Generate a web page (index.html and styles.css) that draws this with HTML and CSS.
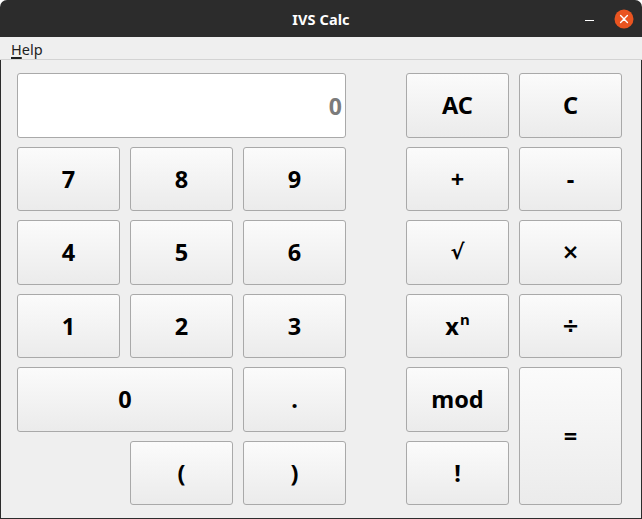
FILE: index.html
```html
<!DOCTYPE html>
<html lang="en">
<head>
<meta charset="utf-8">
<title>IVS Calc</title>
<link rel="stylesheet" href="styles.css">
</head>
<body>
<div class="window">
  <header class="titlebar">
    <span class="title">IVS Calc</span>
    <div class="controls">
      <span class="minimize"></span>
      <span class="close">
        <svg width="20" height="20" viewBox="0 0 20 20"><circle cx="10" cy="10" r="9.5" fill="#e95420"/><path d="M6.6 6.6 L13.4 13.4 M13.4 6.6 L6.6 13.4" stroke="#fff" stroke-width="1.4" stroke-linecap="round"/></svg>
      </span>
    </div>
  </header>
  <nav class="menubar"><span class="menu-item"><span class="mnemonic">H</span>elp</span></nav>
  <main class="content">
    <div class="keypad">
      <div class="display">0</div>
      <button class="key c5">AC</button>
      <button class="key c6">C</button>

      <button class="key">7</button>
      <button class="key">8</button>
      <button class="key">9</button>
      <button class="key c5">+</button>
      <button class="key c6">-</button>

      <button class="key">4</button>
      <button class="key">5</button>
      <button class="key">6</button>
      <button class="key c5 sym">√</button>
      <button class="key c6 sym">×</button>

      <button class="key">1</button>
      <button class="key">2</button>
      <button class="key">3</button>
      <button class="key c5">x<span class="sup">n</span></button>
      <button class="key c6 sym">÷</button>

      <button class="key zero">0</button>
      <button class="key">.</button>
      <button class="key c5">mod</button>
      <button class="key c6 equals">=</button>

      <button class="key c2">(</button>
      <button class="key">)</button>
      <button class="key c5">!</button>
    </div>
  </main>
</div>
</body>
</html>
```
FILE: styles.css
```css
* { box-sizing: border-box; }
html, body { margin: 0; padding: 0; background: #ffffff; }
body { width: 642px; height: 519px; overflow: hidden; }

.window {
  width: 642px;
  height: 519px;
  display: flex;
  flex-direction: column;
  background: #efefef;
  border-radius: 7px 7px 0 0;
  overflow: hidden;
}

.titlebar {
  height: 37px;
  flex: none;
  background: #2c2c2c;
  display: flex;
  align-items: center;
  justify-content: center;
  position: relative;
}
.title {
  color: #ffffff;
  font-family: "Noto Sans", "DejaVu Sans", sans-serif;
  font-weight: 700;
  font-size: 14.5px;
  letter-spacing: 0.1px;
  padding-top: 1px;
}
.controls {
  position: absolute;
  right: 8px;
  top: 9px;
  display: flex;
  align-items: center;
  gap: 20px;
}
.minimize {
  width: 9px;
  height: 1.5px;
  background: #ffffff;
  margin-top: 3px;
}
.close { width: 20px; height: 20px; display: block; }
.close svg { display: block; }

.menubar {
  height: 23px;
  flex: none;
  border-bottom: 1px solid #d3d3d3;
  display: flex;
  align-items: center;
  padding-left: 11px;
}
.menu-item {
  font-family: "Noto Sans", "DejaVu Sans", sans-serif;
  font-size: 14.5px;
  color: #1e1e1e;
  padding-top: 1px;
}
.mnemonic { text-decoration: underline; text-decoration-thickness: 2px; text-underline-offset: 2px; }

.content {
  flex: 1;
  border: 1px solid #2c2c2c;
  border-top: none;
  padding: 13px 0 13px 16px;
}

.keypad {
  display: grid;
  grid-template-columns: 103px 103px 103px 40px 103px 103px;
  grid-template-rows: repeat(6, 1fr);
  column-gap: 10px;
  row-gap: 9px;
  height: 432px;
}

.display {
  grid-column: 1 / 4;
  background: #ffffff;
  border: 1px solid #a9a9a9;
  border-radius: 3px;
  display: flex;
  align-items: center;
  justify-content: flex-end;
  padding-right: 3px;
  padding-top: 2px;
  font-family: "Noto Sans", "DejaVu Sans", sans-serif;
  font-weight: 700;
  font-size: 23px;
  color: #7b7b7b;
}

.key {
  margin: 0;
  padding: 0;
  border: 1px solid #a9a9a9;
  border-radius: 3px;
  background: linear-gradient(#fbfbfb, #ebebeb);
  font-family: "Noto Sans", "DejaVu Sans", sans-serif;
  font-weight: 700;
  font-size: 23.5px;
  color: #000000;
  display: flex;
  align-items: center;
  justify-content: center;
}
.key.sym { font-family: "DejaVu Sans", sans-serif; font-size: 21px; }
.c2 { grid-column: 2; }
.c5 { grid-column: 5; }
.c6 { grid-column: 6; }
.zero { grid-column: 1 / 3; }
.equals { grid-row: 5 / 7; }
.sup { font-size: 15px; position: relative; top: -7px; margin-left: 1px; }
```
